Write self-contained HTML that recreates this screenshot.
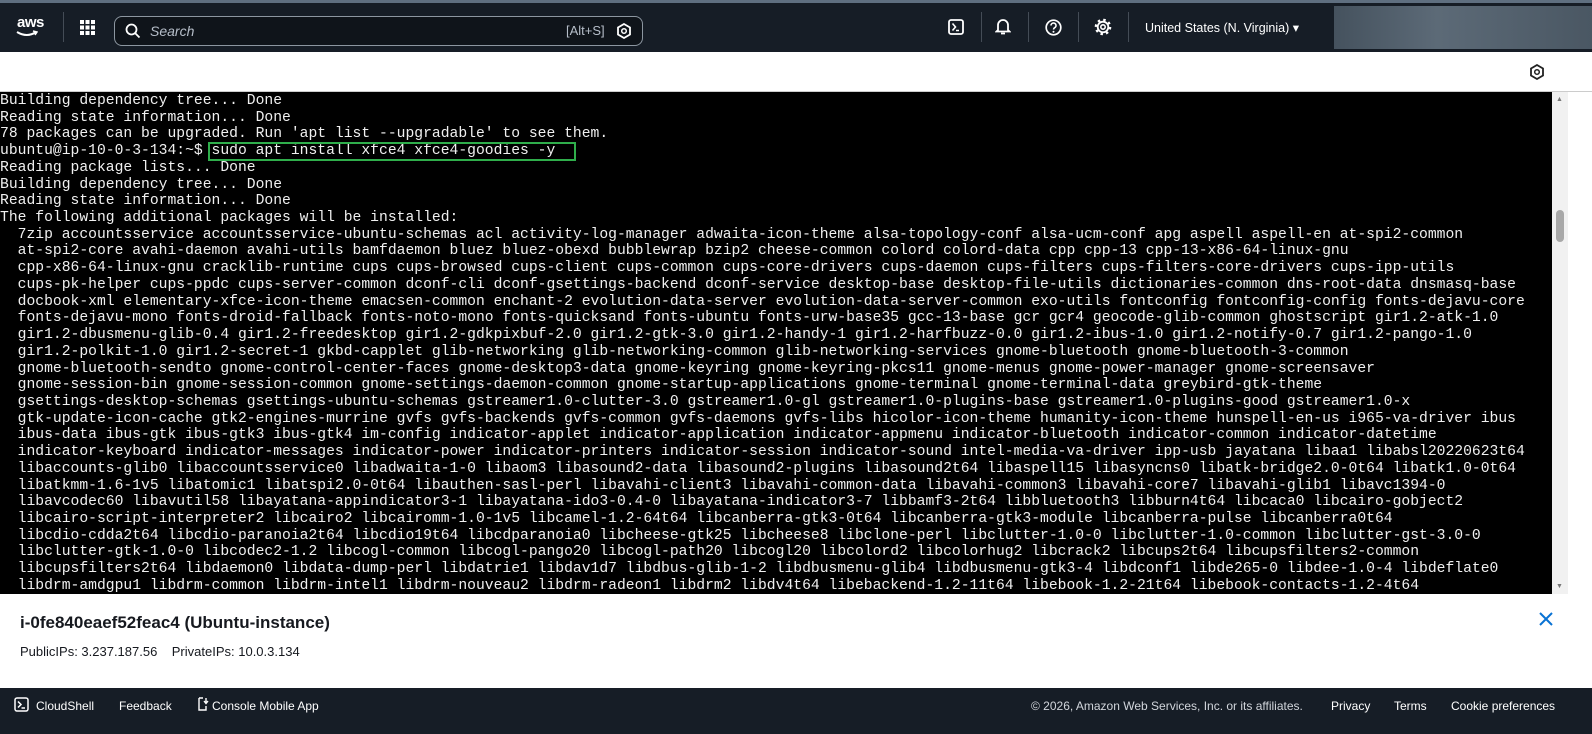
<!DOCTYPE html>
<html><head><meta charset="utf-8"><style>
*{margin:0;padding:0;box-sizing:border-box}
body{width:1592px;height:734px;overflow:hidden;background:#fff;font-family:"Liberation Sans",sans-serif;position:relative}
.top{position:absolute;left:0;top:0;width:1592px;height:52px;background:#161d26;border-top:3px solid #5f6f80}
.blur{position:absolute;left:1334px;top:3px;width:258px;height:43px;background:linear-gradient(90deg,#45525e,#5c6a77 40%,#4a5763)}
.search{position:absolute;left:114px;top:13px;width:529px;height:30px;border:1px solid #8c96a0;border-radius:8px;background:#0f141a;color:#b6bec9;font-size:14px}
.term{position:absolute;left:0;top:92px;width:1552px;height:502px;background:#000;overflow:hidden}
.term pre{font-family:"Liberation Mono",monospace;font-size:14.7px;line-height:16.72px;color:#f0f0f0;padding-top:1px;white-space:pre}
.sb{position:absolute;left:1552px;top:92px;width:16px;height:502px;background:#f1f1f1}
.thumb{position:absolute;left:1556px;top:210px;width:8px;height:32px;background:#a8a8a8;border-radius:4px}
.hl{position:absolute;left:208px;top:142px;width:368px;height:19px;border:2px solid #2fae4b}
.foot{position:absolute;left:0;top:688px;width:1592px;height:46px;background:#161d26;color:#fff;font-size:12px}
.foot span{position:absolute;top:11px}
.div{position:absolute;top:9px;width:1px;height:30px;background:#444c56}
</style></head><body>
<div class="top">
 <div style="position:absolute;left:17px;top:11px;color:#fff;font-size:15px;font-weight:bold;letter-spacing:-0.5px">aws</div>
 <svg style="position:absolute;left:16px;top:27px" width="22" height="8"><path d="M1 2 Q11 8 20 2" stroke="#fff" stroke-width="2" fill="none"/><path d="M17 1 L21 2 L19 5" stroke="#fff" stroke-width="1.5" fill="none"/></svg>
 <div class="div" style="left:63px"></div>
 <svg style="position:absolute;left:80px;top:17px" width="15" height="15" fill="#fff"><rect x="0" y="0" width="4" height="4"/><rect x="5.5" y="0" width="4" height="4"/><rect x="11" y="0" width="4" height="4"/><rect x="0" y="5.5" width="4" height="4"/><rect x="5.5" y="5.5" width="4" height="4"/><rect x="11" y="5.5" width="4" height="4"/><rect x="0" y="11" width="4" height="4"/><rect x="5.5" y="11" width="4" height="4"/><rect x="11" y="11" width="4" height="4"/></svg>
 <div class="search">
  <svg style="position:absolute;left:10px;top:6px" width="16" height="16"><circle cx="6.5" cy="6.5" r="5" stroke="#fff" stroke-width="1.8" fill="none"/><path d="M10 10 L14.5 14.5" stroke="#fff" stroke-width="1.8"/></svg>
  <span style="position:absolute;left:35px;top:6px;font-style:italic">Search</span>
  <span style="position:absolute;left:451px;top:6px;font-size:13px">[Alt+S]</span>
  <svg style="position:absolute;left:502px;top:6px" width="14" height="16"><path d="M7 1 L13 4.5 L13 11.5 L7 15 L1 11.5 L1 4.5Z" stroke="#fff" stroke-width="1.8" fill="none"/><circle cx="7" cy="8" r="2.3" stroke="#fff" stroke-width="1.5" fill="none"/></svg>
 </div>
 <svg style="position:absolute;left:948px;top:16px" width="16" height="16"><rect x="1" y="1" width="14" height="14" rx="2" stroke="#fff" stroke-width="1.8" fill="none"/><path d="M4.5 4.5 L7.5 8 L4.5 11.5 M8 11.5 H11" stroke="#fff" stroke-width="1.6" fill="none"/></svg>
 <div class="div" style="left:981px"></div>
 <svg style="position:absolute;left:995px;top:15px" width="16" height="18"><path d="M3 12 V7 a5 5 0 0 1 10 0 V12 L14.5 13.5 H1.5Z M6 15.5 H10" stroke="#fff" stroke-width="1.8" fill="none"/></svg>
 <div class="div" style="left:1028px"></div>
 <svg style="position:absolute;left:1045px;top:16px" width="17" height="17"><circle cx="8.5" cy="8.5" r="7.3" stroke="#fff" stroke-width="1.7" fill="none"/><path d="M6 6.5 a2.5 2.5 0 1 1 3.5 2.3 Q8.5 9.5 8.5 10.5" stroke="#fff" stroke-width="1.6" fill="none"/><circle cx="8.5" cy="12.8" r="1" fill="#fff"/></svg>
 <div class="div" style="left:1078px"></div>
 <svg style="position:absolute;left:1094px;top:15px" width="18" height="18"><circle cx="9" cy="9" r="5.3" stroke="#fff" stroke-width="1.8" fill="none"/><circle cx="9" cy="9" r="2.2" stroke="#fff" stroke-width="1.6" fill="none"/><circle cx="9" cy="9" r="7" stroke="#fff" stroke-width="2.6" fill="none" stroke-dasharray="2.4 3.1"/></svg>
 <div class="div" style="left:1128px"></div>
 <div style="position:absolute;left:1145px;top:17px;color:#fff;font-size:12.5px">United States (N. Virginia) ▾</div>
 <div class="blur"></div>
</div>
<svg style="position:absolute;left:1530px;top:64px" width="14" height="16"><path d="M7 1 L13 4.5 L13 11.5 L7 15 L1 11.5 L1 4.5Z" stroke="#222" stroke-width="1.8" fill="none"/><circle cx="7" cy="8" r="2.3" stroke="#222" stroke-width="1.5" fill="none"/></svg>
<div style="position:absolute;left:0;top:91px;width:1592px;height:1px;background:#ccc"></div>
<div class="term"><pre>Building dependency tree... Done
Reading state information... Done
78 packages can be upgraded. Run 'apt list --upgradable' to see them.
ubuntu@ip-10-0-3-134:~$ sudo apt install xfce4 xfce4-goodies -y
Reading package lists... Done
Building dependency tree... Done
Reading state information... Done
The following additional packages will be installed:
  7zip accountsservice accountsservice-ubuntu-schemas acl activity-log-manager adwaita-icon-theme alsa-topology-conf alsa-ucm-conf apg aspell aspell-en at-spi2-common
  at-spi2-core avahi-daemon avahi-utils bamfdaemon bluez bluez-obexd bubblewrap bzip2 cheese-common colord colord-data cpp cpp-13 cpp-13-x86-64-linux-gnu
  cpp-x86-64-linux-gnu cracklib-runtime cups cups-browsed cups-client cups-common cups-core-drivers cups-daemon cups-filters cups-filters-core-drivers cups-ipp-utils
  cups-pk-helper cups-ppdc cups-server-common dconf-cli dconf-gsettings-backend dconf-service desktop-base desktop-file-utils dictionaries-common dns-root-data dnsmasq-base
  docbook-xml elementary-xfce-icon-theme emacsen-common enchant-2 evolution-data-server evolution-data-server-common exo-utils fontconfig fontconfig-config fonts-dejavu-core
  fonts-dejavu-mono fonts-droid-fallback fonts-noto-mono fonts-quicksand fonts-ubuntu fonts-urw-base35 gcc-13-base gcr gcr4 geocode-glib-common ghostscript gir1.2-atk-1.0
  gir1.2-dbusmenu-glib-0.4 gir1.2-freedesktop gir1.2-gdkpixbuf-2.0 gir1.2-gtk-3.0 gir1.2-handy-1 gir1.2-harfbuzz-0.0 gir1.2-ibus-1.0 gir1.2-notify-0.7 gir1.2-pango-1.0
  gir1.2-polkit-1.0 gir1.2-secret-1 gkbd-capplet glib-networking glib-networking-common glib-networking-services gnome-bluetooth gnome-bluetooth-3-common
  gnome-bluetooth-sendto gnome-control-center-faces gnome-desktop3-data gnome-keyring gnome-keyring-pkcs11 gnome-menus gnome-power-manager gnome-screensaver
  gnome-session-bin gnome-session-common gnome-settings-daemon-common gnome-startup-applications gnome-terminal gnome-terminal-data greybird-gtk-theme
  gsettings-desktop-schemas gsettings-ubuntu-schemas gstreamer1.0-clutter-3.0 gstreamer1.0-gl gstreamer1.0-plugins-base gstreamer1.0-plugins-good gstreamer1.0-x
  gtk-update-icon-cache gtk2-engines-murrine gvfs gvfs-backends gvfs-common gvfs-daemons gvfs-libs hicolor-icon-theme humanity-icon-theme hunspell-en-us i965-va-driver ibus
  ibus-data ibus-gtk ibus-gtk3 ibus-gtk4 im-config indicator-applet indicator-application indicator-appmenu indicator-bluetooth indicator-common indicator-datetime
  indicator-keyboard indicator-messages indicator-power indicator-printers indicator-session indicator-sound intel-media-va-driver ipp-usb jayatana libaa1 libabsl20220623t64
  libaccounts-glib0 libaccountsservice0 libadwaita-1-0 libaom3 libasound2-data libasound2-plugins libasound2t64 libaspell15 libasyncns0 libatk-bridge2.0-0t64 libatk1.0-0t64
  libatkmm-1.6-1v5 libatomic1 libatspi2.0-0t64 libauthen-sasl-perl libavahi-client3 libavahi-common-data libavahi-common3 libavahi-core7 libavahi-glib1 libavc1394-0
  libavcodec60 libavutil58 libayatana-appindicator3-1 libayatana-ido3-0.4-0 libayatana-indicator3-7 libbamf3-2t64 libbluetooth3 libburn4t64 libcaca0 libcairo-gobject2
  libcairo-script-interpreter2 libcairo2 libcairomm-1.0-1v5 libcamel-1.2-64t64 libcanberra-gtk3-0t64 libcanberra-gtk3-module libcanberra-pulse libcanberra0t64
  libcdio-cdda2t64 libcdio-paranoia2t64 libcdio19t64 libcdparanoia0 libcheese-gtk25 libcheese8 libclone-perl libclutter-1.0-0 libclutter-1.0-common libclutter-gst-3.0-0
  libclutter-gtk-1.0-0 libcodec2-1.2 libcogl-common libcogl-pango20 libcogl-path20 libcogl20 libcolord2 libcolorhug2 libcrack2 libcups2t64 libcupsfilters2-common
  libcupsfilters2t64 libdaemon0 libdata-dump-perl libdatrie1 libdav1d7 libdbus-glib-1-2 libdbusmenu-glib4 libdbusmenu-gtk3-4 libdconf1 libde265-0 libdee-1.0-4 libdeflate0
  libdrm-amdgpu1 libdrm-common libdrm-intel1 libdrm-nouveau2 libdrm-radeon1 libdrm2 libdv4t64 libebackend-1.2-11t64 libebook-1.2-21t64 libebook-contacts-1.2-4t64</pre></div>
<div class="hl"></div>
<div class="sb"><div style="position:absolute;left:4px;top:4px;font-size:7px;color:#777">▲</div><div style="position:absolute;left:4px;bottom:4px;font-size:7px;color:#777">▼</div></div>
<div class="thumb"></div>
<div style="position:absolute;left:20px;top:613px;font-size:17px;font-weight:bold;color:#16191f">i-0fe840eaef52feac4 (Ubuntu-instance)</div>
<div style="position:absolute;left:20px;top:644px;font-size:13px;color:#16191f">PublicIPs: 3.237.187.56&nbsp;&nbsp;&nbsp; PrivateIPs: 10.0.3.134</div>
<svg style="position:absolute;left:1539px;top:612px" width="14" height="14"><path d="M1 1 L13 13 M13 1 L1 13" stroke="#0972d3" stroke-width="2"/></svg>
<div class="foot">
 <svg style="position:absolute;left:14px;top:9px" width="15" height="15"><rect x="1" y="1" width="13" height="13" rx="2" stroke="#fff" stroke-width="1.5" fill="none"/><path d="M4 4.5 L7 7.5 L4 10.5 M7.5 11 H11" stroke="#fff" stroke-width="1.5" fill="none"/></svg>
 <span style="left:36px">CloudShell</span>
 <span style="left:119px">Feedback</span>
 <svg style="position:absolute;left:196px;top:8px" width="13" height="16"><path d="M3 2 H7 M3 2 V14 H10 V10 M10 2 V7 M8 5 L10 7.5 L12 5" stroke="#fff" stroke-width="1.4" fill="none"/></svg>
 <span style="left:212px">Console Mobile App</span>
 <span style="left:1031px;color:#d1d5db">© 2026, Amazon Web Services, Inc. or its affiliates.</span>
 <span style="left:1331px">Privacy</span>
 <span style="left:1394px">Terms</span>
 <span style="left:1451px">Cookie preferences</span>
</div>
</body></html>
